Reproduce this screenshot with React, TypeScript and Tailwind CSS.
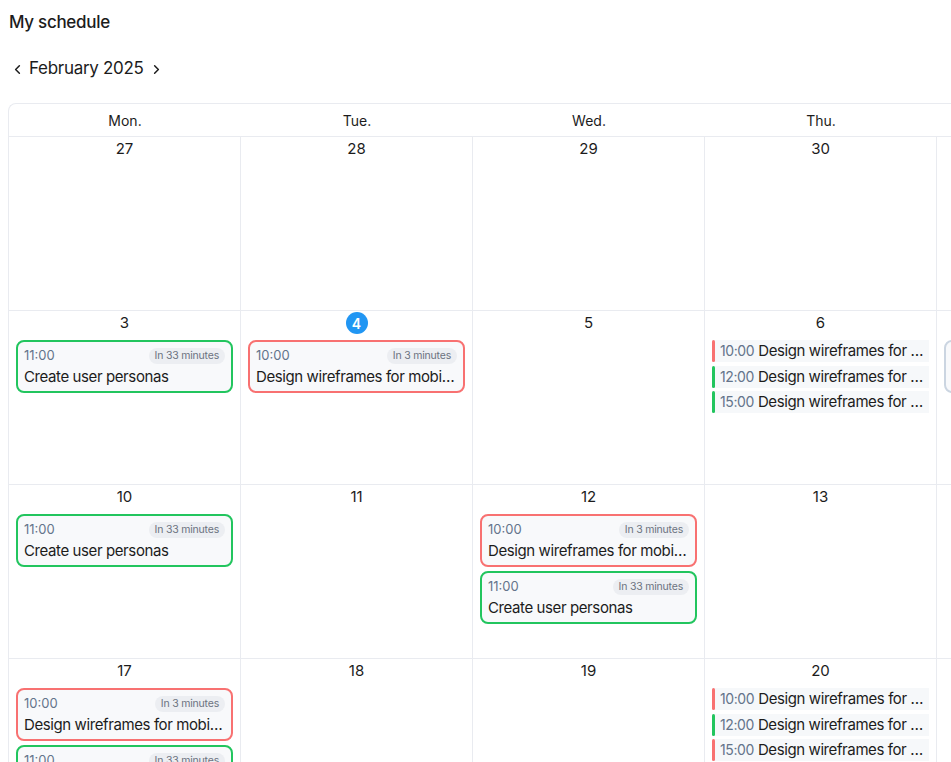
import { ChevronLeft, ChevronRight } from 'lucide-react';

type Tone = 'red' | 'green' | 'gray';

interface CardEvent {
  kind: 'card';
  time: string;
  title: string;
  badge: string;
  tone: Tone;
}

interface LineEvent {
  kind: 'line';
  time: string;
  title: string;
  tone: Tone;
}

type CalEvent = CardEvent | LineEvent;

interface Day {
  n: number;
  today?: boolean;
  events?: CalEvent[];
}

const personas: CardEvent = { kind: 'card', time: '11:00', title: 'Create user personas', badge: 'In 33 minutes', tone: 'green' };
const wireframes: CardEvent = { kind: 'card', time: '10:00', title: 'Design wireframes for mobile app', badge: 'In 3 minutes', tone: 'red' };
const line = (time: string, tone: Tone): LineEvent => ({ kind: 'line', time, title: 'Design wireframes for mobile app', tone });

const weekdays = ['Mon.', 'Tue.', 'Wed.', 'Thu.', 'Fri.', 'Sat.', 'Sun.'];

const weeks: Day[][] = [
  [{ n: 27 }, { n: 28 }, { n: 29 }, { n: 30 }, { n: 31 }, { n: 1 }, { n: 2 }],
  [
    { n: 3, events: [personas] },
    { n: 4, today: true, events: [wireframes] },
    { n: 5 },
    { n: 6, events: [line('10:00', 'red'), line('12:00', 'green'), line('15:00', 'green')] },
    { n: 7, events: [{ kind: 'card', time: '09:00', title: 'Team standup', badge: 'Tomorrow', tone: 'gray' }] },
    { n: 8 },
    { n: 9 },
  ],
  [
    { n: 10, events: [personas] },
    { n: 11 },
    { n: 12, events: [wireframes, personas] },
    { n: 13 },
    { n: 14 },
    { n: 15 },
    { n: 16 },
  ],
  [
    { n: 17, events: [wireframes, personas] },
    { n: 18 },
    { n: 19 },
    { n: 20, events: [line('10:00', 'red'), line('12:00', 'green'), line('15:00', 'red')] },
    { n: 21 },
    { n: 22 },
    { n: 23 },
  ],
  [{ n: 24 }, { n: 25 }, { n: 26 }, { n: 27 }, { n: 28 }, { n: 1 }, { n: 2 }],
];

const cardBorder: Record<Tone, string> = {
  red: 'border-[#f87171]',
  green: 'border-[#22c55e]',
  gray: 'border-[#cbd5e1]',
};

const barColor: Record<Tone, string> = {
  red: 'bg-[#f87171]',
  green: 'bg-[#22c55e]',
  gray: 'bg-[#cbd5e1]',
};

function EventCard({ ev }: { ev: CardEvent }) {
  return (
    <div className={`rounded-lg border-2 ${cardBorder[ev.tone]} bg-[#f8f9fb] px-[6px] pt-[6px] pb-[4px]`}>
      <div className="flex h-4 items-center justify-between">
        <span className="text-[13px] text-[#64748b]">{ev.time}</span>
        <span className="rounded-full bg-[#eceef2] px-1.5 text-[10.5px] leading-4 tracking-[-0.2px] text-[#6b7280]">{ev.badge}</span>
      </div>
      <div className="mt-[3px] truncate text-[15px] leading-5 tracking-[-0.4px] text-[#1c1c1c]">{ev.title}</div>
    </div>
  );
}

function EventLine({ ev }: { ev: LineEvent }) {
  return (
    <div className="flex h-[22px] items-center bg-[#f6f8fa]">
      <span className={`h-full w-[3px] shrink-0 rounded-sm ${barColor[ev.tone]}`} />
      <div className="ml-[5px] truncate text-[15px] leading-5 tracking-[-0.4px] text-[#1c1c1c]">
        <span className="mr-1 text-[14px] text-[#64748b]">{ev.time}</span>
        {ev.title}
      </div>
    </div>
  );
}

function DayCell({ day }: { day: Day }) {
  const events = day.events ?? [];
  const compact = events.length > 0 && events[0].kind === 'line';
  return (
    <div className="h-[174px] w-[232px] border-r border-b border-[#e9ebf0] px-[7px]">
      <div className="flex h-6 items-center justify-center">
        {day.today ? (
          <span className="flex h-[22px] w-[22px] items-center justify-center rounded-full bg-[#2196f3] text-[14px] font-semibold text-white">
            {day.n}
          </span>
        ) : (
          <span className="text-[15px] text-[#1c1c1c]">{day.n}</span>
        )}
      </div>
      <div className={`mt-[5px] flex flex-col ${compact ? 'gap-[3.5px]' : 'gap-[4px]'}`}>
        {events.map((ev, i) =>
          ev.kind === 'card' ? <EventCard key={i} ev={ev} /> : <EventLine key={i} ev={ev} />
        )}
      </div>
    </div>
  );
}

export default function App() {
  return (
    <div
      className="h-screen overflow-hidden bg-white pl-2 pt-[10px] text-[#1c1c1c]"
      style={{ fontFamily: 'Inter, "Noto Sans", sans-serif' }}
    >
      <h1 className="ml-[1px] text-[17px] leading-6 font-medium tracking-[-0.3px]">My schedule</h1>

      <div className="mt-[23px] flex h-6 items-center">
        <button className="ml-[1px] flex h-6 w-4 items-center justify-center">
          <ChevronLeft size={15} strokeWidth={2.4} />
        </button>
        <span className="ml-[4px] text-[17px] tracking-[-0.3px]">February 2025</span>
        <button className="ml-[5px] flex h-6 w-4 items-center justify-center">
          <ChevronRight size={15} strokeWidth={2.4} />
        </button>
      </div>

      <div className="mt-[22px] w-[1625px] rounded-tl-lg border-t border-l border-[#e9ebf0]">
        <div className="flex h-[33px] border-b border-[#e9ebf0]">
          {weekdays.map(d => (
            <div key={d} className="flex w-[232px] items-center justify-center text-[14px] text-[#1c1c1c]">
              {d}
            </div>
          ))}
        </div>
        {weeks.map((week, wi) => (
          <div key={wi} className="flex">
            {week.map((day, di) => (
              <DayCell key={di} day={day} />
            ))}
          </div>
        ))}
      </div>
    </div>
  );
}
